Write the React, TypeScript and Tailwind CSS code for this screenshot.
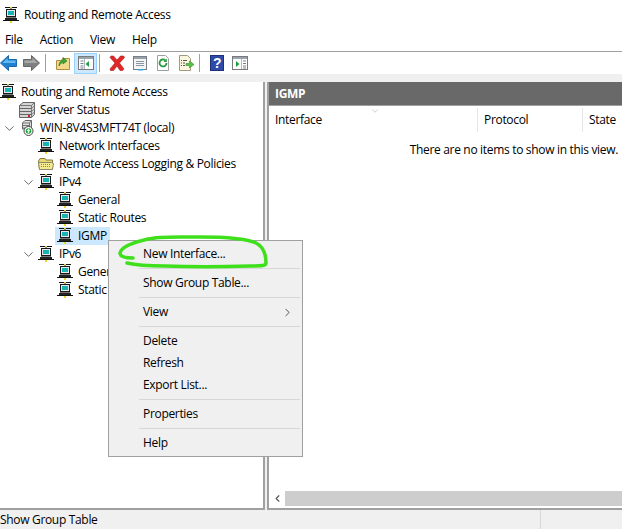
import React from 'react';
import { ChevronDown, ChevronRight, ChevronLeft } from 'lucide-react';

function NetIcon() {
  return (
    <svg width="16" height="16" viewBox="0 0 16 16" className="shrink-0">
      <path d="M2 .5h12M0 13.500h16" stroke="#111" />
      <rect x="7" y="0" width="2" height="1" fill="#e8d828" />
      <rect x="7" y="14" width="2" height="2" fill="#e8d828" />
      <path d="M8 1v2" stroke="#333" />
      <rect x="3.500" y="2.500" width="9" height="7" fill="#e8e8e8" stroke="#1a1a1a" />
      <rect x="5" y="4" width="6" height="4" fill="#18b4b4" />
      <rect x="3" y="10" width="10" height="1" fill="#777" />
      <rect x="2" y="11" width="12" height="2" fill="#222" />
    </svg>
  );
}

function ServerIcon() {
  return (
    <svg width="16" height="16" viewBox="0 0 16 16" className="shrink-0">
      <path d="M.5 3.500 4 .5h11.500v12l-3 3H.5z" fill="#d4d4d4" stroke="#666" />
      <path d="M.5 3.500h12v12M12.500 3.500 15.500 .5" fill="none" stroke="#777" />
      <path d="M1 6.500h11M1 9.500h11M1 12.500h11" stroke="#666" />
      <path d="M13 6l2.500-2M13 9l2.500-2M13 12l2.500-2" stroke="#888" />
      <rect x="9" y="13" width="2" height="2" fill="#d02020" />
    </svg>
  );
}

function LocalServerIcon() {
  return (
    <svg width="16" height="16" viewBox="0 0 16 16" className="shrink-0">
      <path d="M3.500 3 6 .5h6.500V9h-9z" fill="#e0e0e0" stroke="#666" />
      <path d="M3.500 3h7v9M10.500 3l2-2.500M4 5.500h6M4 8h6" fill="none" stroke="#777" />
      <circle cx="9.500" cy="11" r="4.500" fill="#fff" stroke="#444" />
      <circle cx="9.500" cy="11" r="2.800" fill="#18a038" />
      <path d="M9.500 8.500 7.500 11h1.200v2h1.600v-2h1.200z" fill="#d8f8d8" />
    </svg>
  );
}

function FolderIcon() {
  return (
    <svg width="16" height="16" viewBox="0 0 16 16" className="shrink-0">
      <path d="M.5 5 2 2.500h5L8 4h6.500v9.500h-13z" fill="#e8d870" stroke="#8a7a40" />
      <path d="M1.500 13.500 .5 6.500h13l2 1-1 6z" fill="#f4e890" stroke="#8a8a6a" />
      <path d="M3 8.500h9M3 10.500h9" stroke="#8a8a6a" strokeDasharray="1 1" />
    </svg>
  );
}

function TreeRow({ indent, text, chevron, icon, selected }: { indent?: string; text: string; chevron?: boolean; icon?: React.ReactNode; selected?: boolean }) {
  return (
    <div className={`flex h-[18px] items-center ${indent ?? ''}`}>
      {chevron !== undefined && (
        <div className="flex w-[19px] shrink-0 items-center justify-center">
          {chevron && <ChevronDown size={15} strokeWidth={1.4} color="#555" />}
        </div>
      )}
      <div className={`relative flex h-[18px] items-center gap-[5px] ${selected ? "before:absolute before:-left-[2px] before:-right-[3px] before:inset-y-0 before:bg-[#cce8ff] before:content-['']" : ''}`}>
        <div className="relative">{icon ?? <NetIcon />}</div>
        <span className="relative">{text}</span>
      </div>
    </div>
  );
}

function MenuItem({ text, arrow }: { text: string; arrow?: boolean }) {
  return (
    <div className="flex h-[22px] items-center justify-between pl-[34px] pr-[8px]">
      <span>{text}</span>
      {arrow && <ChevronRight size={13} strokeWidth={1.5} color="#333" />}
    </div>
  );
}

function MenuSep() {
  return <div className="mx-[2px] my-[3px] ml-[30px] h-px bg-[#d7d7d7]" />;
}

function ToolSep() {
  return (
    <div className="flex h-[21px] w-[8px] shrink-0 items-center pl-[2px]">
      <div className="h-[18px] w-px bg-[#a0a0a0]" />
    </div>
  );
}

function ToolBtn({ children, active }: { children: React.ReactNode; active?: boolean }) {
  return (
    <div className={`flex h-[21px] w-[23px] shrink-0 items-center justify-center border ${active ? 'border-[#99d1ff] bg-[#cce8ff]' : 'border-transparent'}`}>
      {children}
    </div>
  );
}

function ArrowIcon({ dir, c1, c2, stroke }: { dir: 'l' | 'r'; c1: string; c2: string; stroke: string }) {
  return (
    <svg width="17" height="16" viewBox="0 0 17 16" className={dir === 'r' ? '' : '-scale-x-100'}>
      <path d="M.5 4.500h8V.5L16.500 8l-8 7.500v-4h-8z" fill={c2} stroke={stroke} />
      <path d="M1.500 5.500h8V3L14.500 8H1.500z" fill={c1} />
    </svg>
  );
}

function PaneIcon({ side }: { side: 'l' | 'r' }) {
  return (
    <svg width="16" height="16" viewBox="0 0 16 16">
      <rect x=".5" y="1.500" width="15" height="13" fill="#fff" stroke="#7a7a7a" />
      <rect x="1" y="2" width="14" height="2" fill="#9aa4ae" />
      {side === 'l' ? (
        <>
          <path d="M2.500 6h3M2.500 8.500h3M2.500 11h3M2.500 13h3" stroke="#708090" />
          <path d="M11 6v6L7.500 9z" fill="#20a040" />
          <path d="M6.500 4v10" stroke="#b0b8c0" />
        </>
      ) : (
        <>
          <path d="M11 6h3M11 8.500h3M11 11h3M11 13h3" stroke="#708090" />
          <path d="M4 6v6l3.500-3z" fill="#20a040" />
          <path d="M9.500 4v10" stroke="#b0b8c0" />
        </>
      )}
    </svg>
  );
}

function Toolbar() {
  return (
    <div className="-ml-[3px] flex h-[22px] shrink-0 items-center">
      <ToolBtn><ArrowIcon dir="l" c1="#62b8f0" c2="#1f80d0" stroke="#1a68b0" /></ToolBtn>
      <ToolBtn><ArrowIcon dir="r" c1="#a8a8a8" c2="#808080" stroke="#666" /></ToolBtn>
      <ToolSep />
      <ToolBtn>
        <svg width="16" height="16" viewBox="0 0 16 16">
          <path d="M1.500 5.500h5l1-2h7v11h-13z" fill="#f2d98c" stroke="#b09040" />
          <path d="M4 11c0-4 2-5.500 4-6V2.500L12 6 8 9V7C6.500 7.500 5.500 9 4 11z" fill="#3aa838" stroke="#1f7a20" strokeWidth=".6" />
        </svg>
      </ToolBtn>
      <ToolBtn active><PaneIcon side="l" /></ToolBtn>
      <ToolSep />
      <ToolBtn>
        <svg width="16" height="16" viewBox="0 0 16 16">
          <path d="M2 1h2.500L8 5l3.500-4H14.500l1 1.500L10.500 8l4.500 6-1.500 1.500H11L8 11l-3.500 4.500H1.500L1 14l5-6L1 2.500z" fill="#e02828" stroke="#b01818" strokeWidth=".6" />
        </svg>
      </ToolBtn>
      <ToolBtn>
        <svg width="16" height="16" viewBox="0 0 16 16">
          <rect x="1.500" y="1.500" width="13" height="13" fill="#f2f4f6" stroke="#7a8088" />
          <rect x="2" y="2" width="12" height="2" fill="#98a0a8" />
          <path d="M4 6.500h8M4 8.500h8M4 10.500h8" stroke="#8a96a4" />
          <rect x="6" y="14" width="5" height="1.500" fill="#30a8e0" />
        </svg>
      </ToolBtn>
      <ToolBtn>
        <svg width="16" height="16" viewBox="0 0 16 16">
          <path d="M2.500 .5h8l3 3v12h-11z" fill="#fff" stroke="#a0a0a0" />
          <path d="M11.500 8a3.500 3.500 0 1 1-1.200-2.700" fill="none" stroke="#2a9a40" strokeWidth="1.800" />
          <path d="M11.800 3.500v3.500H8.500z" fill="#2a9a40" />
        </svg>
      </ToolBtn>
      <ToolBtn>
        <svg width="16" height="16" viewBox="0 0 16 16">
          <path d="M1.500 .5h8l3 3v12h-11z" fill="#fbf6de" stroke="#a09a80" />
          <path d="M3 5.500h1M5 5.500h4M3 8h1M5 8h2M3 10.500h1M5 10.500h2" stroke="#555" />
          <path d="M8 8.500h3.500V6L16 9.500 11.500 13v-2.500H8z" fill="#58c048" stroke="#2f8a30" strokeWidth=".6" />
        </svg>
      </ToolBtn>
      <ToolSep />
      <ToolBtn>
        <svg width="14" height="16" viewBox="0 0 14 16">
          <rect x=".5" y=".5" width="13" height="15" fill="#2f4aa8" stroke="#1e3078" />
          <text x="7" y="13" textAnchor="middle" fontSize="14" fontWeight="700" fill="#fff" fontFamily="'Liberation Sans', sans-serif">?</text>
        </svg>
      </ToolBtn>
      <ToolBtn><PaneIcon side="r" /></ToolBtn>
    </div>
  );
}

export default function App() {
  return (
    <div className="relative flex h-[529px] w-[622px] flex-col overflow-hidden bg-white font-['Open_Sans',sans-serif] text-[12px] tracking-[-0.32px] text-black">
      <div className="flex h-[30px] shrink-0 items-center gap-[5px] pl-[3px]">
        <NetIcon />
        <span>Routing and Remote Access</span>
      </div>
      <div className="flex h-[21px] shrink-0 items-center gap-[17px] pb-[1px] pl-[5px]">
        <span>File</span><span>Action</span><span>View</span><span>Help</span>
      </div>
      <div className="shrink-0 border-t border-[#a0a0a0]">
        <Toolbar />
      </div>
      <div className="flex min-h-0 flex-1 gap-[2px] bg-[#f0f0f0] pt-[8px]">
        <div className="w-[265px] shrink-0 border-r-2 border-b-2 border-[#a0a0a0] bg-white pt-px">
          <TreeRow text="Routing and Remote Access" />
          <TreeRow indent="pl-[19px]" text="Server Status" icon={<ServerIcon />} />
          <TreeRow text="WIN-8V4S3MFT74T (local)" chevron icon={<LocalServerIcon />} />
          <TreeRow indent="pl-[38px]" text="Network Interfaces" />
          <TreeRow indent="pl-[38px]" text="Remote Access Logging & Policies" icon={<FolderIcon />} />
          <TreeRow indent="pl-[19px]" text="IPv4" chevron />
          <TreeRow indent="pl-[57px]" text="General" />
          <TreeRow indent="pl-[57px]" text="Static Routes" />
          <TreeRow indent="pl-[57px]" text="IGMP" selected />
          <TreeRow indent="pl-[19px]" text="IPv6" chevron />
          <TreeRow indent="pl-[57px]" text="General" />
          <TreeRow indent="pl-[57px]" text="Static Routes" />
        </div>
        <div className="flex min-w-0 flex-1 flex-col border-l-2 border-b-2 border-[#a0a0a0] bg-white">
          <div className="flex h-[23px] shrink-0 items-center bg-[#696969] pl-[6px] font-bold text-white">IGMP</div>
          <div className="h-px shrink-0 bg-[#a0a0a0]" />
          <div className="relative flex h-[26px] shrink-0 items-center pt-[2px]">
            <div className="flex h-full w-[209px] shrink-0 items-center border-r border-[#e5e5e5] pl-[6px]">Interface</div>
            <div className="flex h-full w-[105px] shrink-0 items-center border-r border-[#e5e5e5] pl-[6px]">Protocol</div>
            <div className="flex h-full items-center pl-[6px]">State</div>
            <ChevronDown size={10} strokeWidth={1} color="#888" className="absolute left-[101px] top-0" />
          </div>
          <div className="flex-1 pr-[4px] pt-[9px] text-right">There are no items to show in this view.</div>
          <div className="mb-[2px] flex h-[15px] shrink-0 items-center">
            <div className="flex h-full w-[16px] shrink-0 items-center justify-center">
              <ChevronLeft size={11} strokeWidth={2.5} color="#555" />
            </div>
            <div className="h-full flex-1 bg-[#cdcdcd]" />
          </div>
        </div>
      </div>
      <div className="flex h-[19px] shrink-0 items-center bg-[#f0f0f0]">
        <div className="flex h-full w-[541px] shrink-0 items-center border-r border-[#d8d8d8]">Show Group Table</div>
      </div>
      <div className="absolute left-[108px] top-[240px] w-[195px] border border-[#a0a0a0] bg-[#f0f0f0] py-[2px]">
        <MenuItem text="New Interface..." />
        <MenuSep />
        <MenuItem text="Show Group Table..." />
        <MenuSep />
        <MenuItem text="View" arrow />
        <MenuSep />
        <MenuItem text="Delete" />
        <MenuItem text="Refresh" />
        <MenuItem text="Export List..." />
        <MenuSep />
        <MenuItem text="Properties" />
        <MenuSep />
        <MenuItem text="Help" />
      </div>
      <svg width="622" height="529" viewBox="0 0 622 529" className="pointer-events-none absolute left-0 top-0">
        <path d="M133 258C126 258 120 257 120 253C121 247 135 242 148 239C160 236 175 237 200 237C225 237 245 238 256 243C264 247 266 255 266 263C266 266 262 266 250 266C220 267 190 267 165 266C150 266 135 265 127 263" fill="none" stroke="#3ee01c" strokeWidth="3.500" strokeLinecap="round" />
      </svg>
    </div>
  );
}
